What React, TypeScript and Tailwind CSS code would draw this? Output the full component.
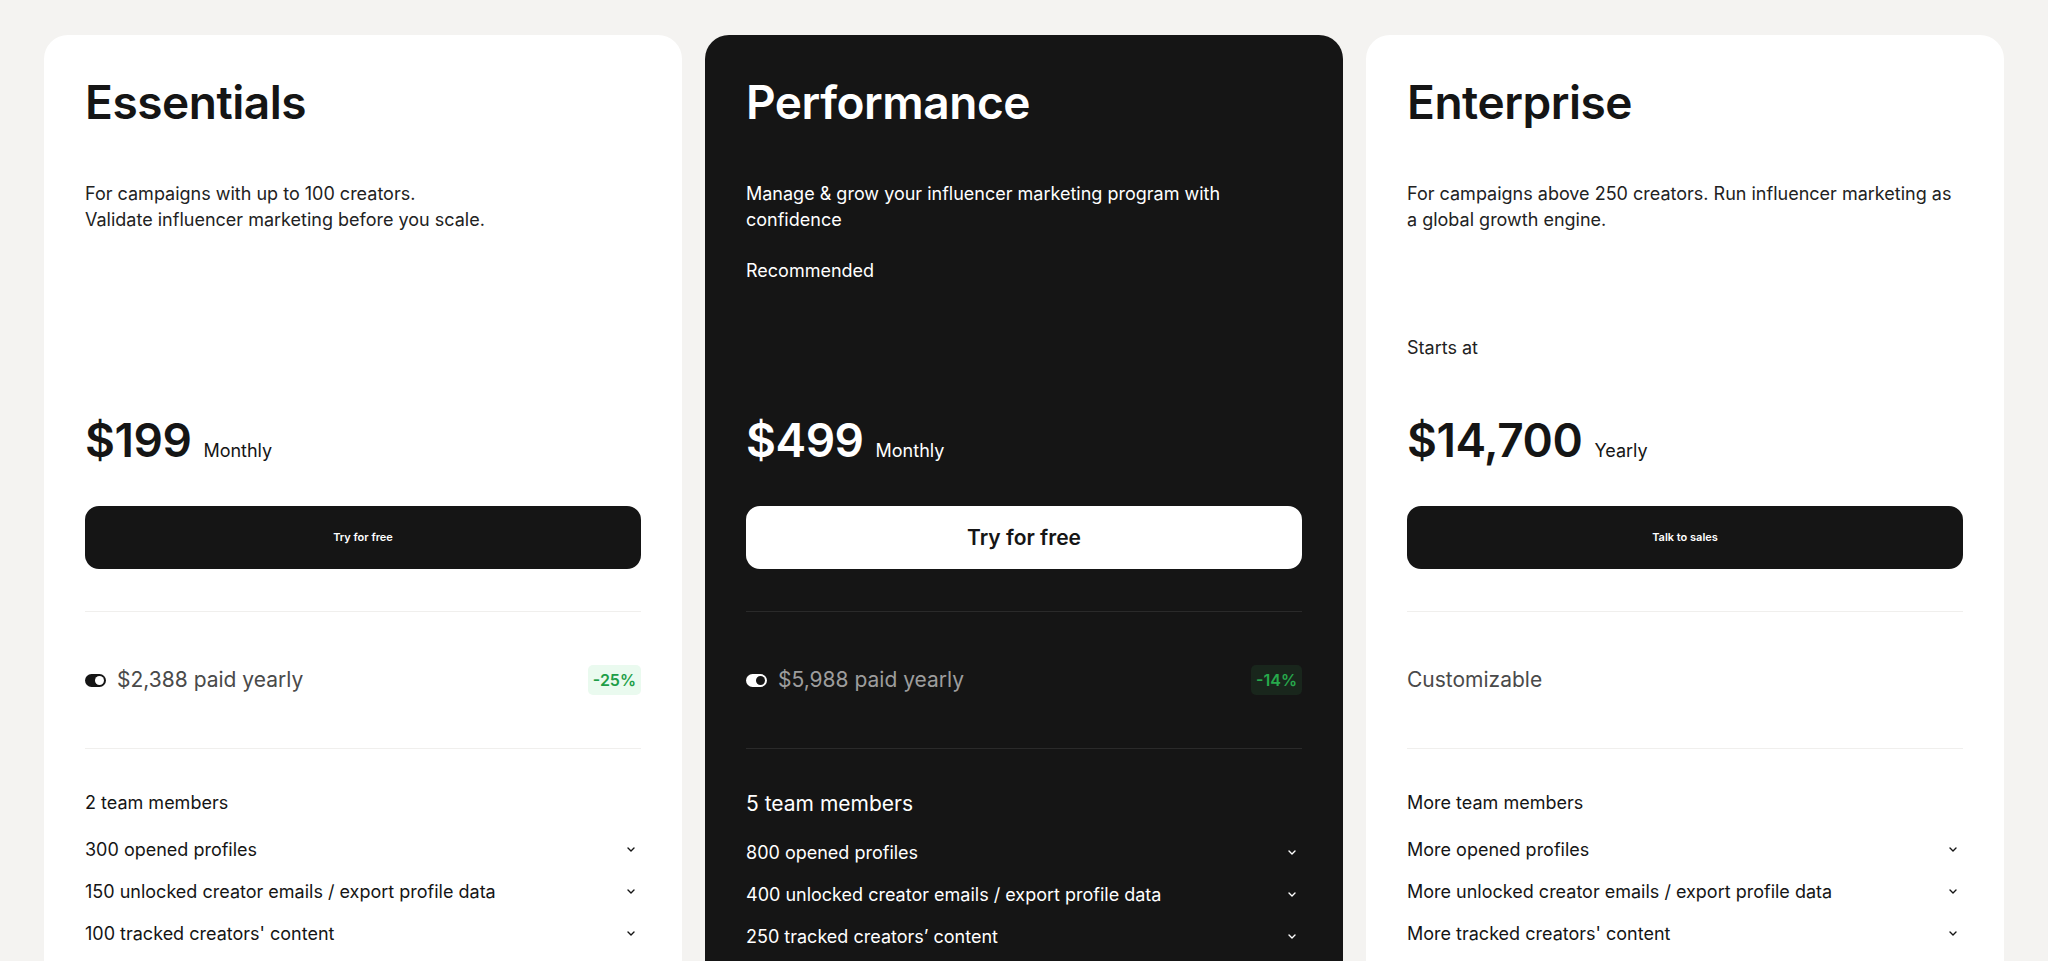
import type React from "react";

interface Plan {
  name: string;
  description: React.ReactNode;
  extra?: string;
  startsAt?: boolean;
  price: string;
  period: string;
  cta: string;
  yearly?: string;
  discount?: string;
  custom?: string;
  team: string;
  features: string[];
  dark?: boolean;
}

const plans: Plan[] = [
  {
    name: "Essentials",
    description: (
      <>
        For campaigns with up to 100 creators.
        <br />
        Validate influencer marketing before you scale.
      </>
    ),
    price: "$199",
    period: "Monthly",
    cta: "Try for free",
    yearly: "$2,388 paid yearly",
    discount: "-25%",
    team: "2 team members",
    features: [
      "300 opened profiles",
      "150 unlocked creator emails / export profile data",
      "100 tracked creators' content",
    ],
  },
  {
    name: "Performance",
    description: (
      <>
        Manage &amp; grow your influencer marketing program with
        <br />
        confidence
      </>
    ),
    extra: "Recommended",
    price: "$499",
    period: "Monthly",
    cta: "Try for free",
    yearly: "$5,988 paid yearly",
    discount: "-14%",
    team: "5 team members",
    features: [
      "800 opened profiles",
      "400 unlocked creator emails / export profile data",
      "250 tracked creators’ content",
    ],
    dark: true,
  },
  {
    name: "Enterprise",
    description: (
      <>
        For campaigns above 250 creators. Run influencer marketing as
        <br />
        a global growth engine.
      </>
    ),
    startsAt: true,
    price: "$14,700",
    period: "Yearly",
    cta: "Talk to sales",
    custom: "Customizable",
    team: "More team members",
    features: [
      "More opened profiles",
      "More unlocked creator emails / export profile data",
      "More tracked creators' content",
    ],
  },
];

const Toggle = ({ dark }: { dark?: boolean }) => (
  <span
    className={`flex h-[13px] w-[21px] items-center justify-end rounded-full px-[2px] ${
      dark ? "bg-white" : "bg-[#151515]"
    }`}
  >
    <span
      className={`h-[9px] w-[9px] rounded-full ${dark ? "bg-[#151515]" : "bg-white"}`}
    />
  </span>
);

const Chevron = () => (
  <svg width="8" height="5" viewBox="0 0 8 5" fill="none" className="mr-[6px]">
    <path d="M1 1l3 3 3-3" stroke="currentColor" strokeWidth="1.4" strokeLinecap="round" strokeLinejoin="round" />
  </svg>
);

const PlanCard = ({ plan }: { plan: Plan }) => {
  const dark = plan.dark;
  return (
    <div
      className={`rounded-[24px] px-[41px] pt-[42px] pb-[60px] ${
        dark ? "bg-[#151515] text-white" : "bg-white text-[#151515]"
      }`}
    >
      {/* Title + description */}
      <h2 className="text-[46px] font-semibold leading-[1.1] tracking-[-0.01em]">{plan.name}</h2>
      <div className="mt-[53px] flex h-[234px] flex-col">
        <p className={`text-[18px] leading-[26px] ${dark ? "text-white" : "text-[#222]"}`}>
          {plan.description}
        </p>
        {plan.extra && <p className="mt-[25px] text-[18px] leading-[26px]">{plan.extra}</p>}
        {plan.startsAt && (
          <p className="mt-auto mb-[54px] text-[18px] leading-[26px] text-[#222]">Starts at</p>
        )}
      </div>

      {/* Price */}
      <div className="flex items-baseline gap-[12px]">
        <span className="text-[46px] font-semibold leading-[1.1] tracking-[-0.01em]">{plan.price}</span>
        <span className="text-[18px]">{plan.period}</span>
      </div>

      <button
        className={`mt-[41px] flex h-[63px] w-full items-center justify-center rounded-[14px] font-semibold ${
          dark ? "bg-white text-[21px] text-[#151515]" : "bg-[#151515] text-[11px] text-white"
        }`}
      >
        {plan.cta}
      </button>

      <div className={`mt-[42px] h-px ${dark ? "bg-[#2a2a2a]" : "bg-[#f0efed]"}`} />

      {/* Yearly billing */}
      <div className="mt-[53px] flex h-[30px] items-center justify-between">
        {plan.custom ? (
          <span className="text-[21px] text-[#4a4a4a]">{plan.custom}</span>
        ) : (
          <>
            <div className="flex items-center gap-[11px]">
              <Toggle dark={dark} />
              <span className={`text-[21px] ${dark ? "text-[#9d9d9d]" : "text-[#4a4a4a]"}`}>
                {plan.yearly}
              </span>
            </div>
            <span
              className={`flex h-[30px] items-center rounded-[5px] px-[5px] text-[16px] font-semibold ${
                dark ? "bg-[#19261c] text-[#27a94c]" : "bg-[#eafaef] text-[#1e9e48]"
              }`}
            >
              {plan.discount}
            </span>
          </>
        )}
      </div>

      <div className={`mt-[53px] h-px ${dark ? "bg-[#2a2a2a]" : "bg-[#f0efed]"}`} />

      {/* Features */}
      <div className={dark ? "mt-[34px]" : "mt-[33px]"}>
        <div className={`flex h-[41px] items-center ${dark ? "text-[21px]" : "text-[18px]"}`}>
          {plan.team}
        </div>
        <div className={dark ? "mt-[7px]" : "mt-[5px]"}>
          {plan.features.map((f) => (
            <div key={f} className="flex h-[42px] items-center justify-between text-[18px]">
              <span>{f}</span>
              <Chevron />
            </div>
          ))}
        </div>
      </div>
    </div>
  );
};

export default function App() {
  return (
    <div className="min-h-screen bg-[#f4f3f1] px-[44px] pt-[35px] font-['Inter','Noto_Sans',sans-serif]">
      <div className="grid grid-cols-3 gap-[23px]">
        {plans.map((p) => (
          <PlanCard key={p.name} plan={p} />
        ))}
      </div>
    </div>
  );
}
